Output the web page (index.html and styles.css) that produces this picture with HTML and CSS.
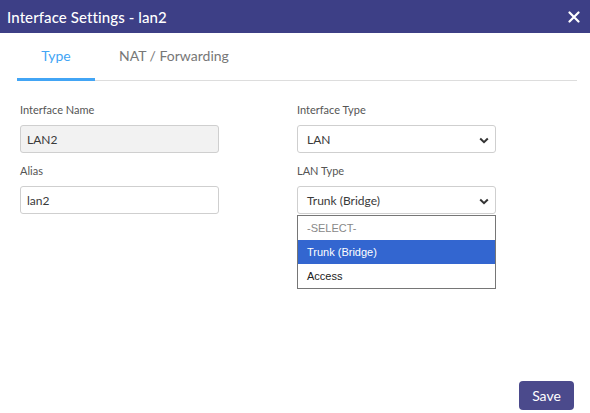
FILE: index.html
```html
<!DOCTYPE html>
<html>
<head>
<meta charset="utf-8">
<link rel="stylesheet" href="styles.css">
</head>
<body>
<div class="dialog">
  <div class="header">
    <span class="title">Interface Settings - lan2</span>
    <svg class="close" width="12" height="12" viewBox="0 0 12 12"><path d="M1.5 1.5 L10.5 10.5 M10.5 1.5 L1.5 10.5" stroke="#fff" stroke-width="2.2" stroke-linecap="round"/></svg>
  </div>
  <div class="tabs">
    <div class="tab active">Type</div>
    <div class="tab">NAT / Forwarding</div>
  </div>
  <div class="form">
    <div class="field">
      <div class="label">Interface Name</div>
      <div class="control disabled">LAN2</div>
    </div>
    <div class="field">
      <div class="label">Interface Type</div>
      <div class="control select">LAN
        <svg class="chev" width="10" height="7" viewBox="0 0 10 7"><path d="M1.2 1.5 L5 5.2 L8.8 1.5" fill="none" stroke="#333" stroke-width="2"/></svg>
      </div>
    </div>
    <div class="field">
      <div class="label">Alias</div>
      <div class="control">lan2</div>
    </div>
    <div class="field">
      <div class="label">LAN Type</div>
      <div class="control select">Trunk (Bridge)
        <svg class="chev" width="10" height="7" viewBox="0 0 10 7"><path d="M1.2 1.5 L5 5.2 L8.8 1.5" fill="none" stroke="#333" stroke-width="2"/></svg>
        <div class="menu">
          <div class="opt placeholder">-SELECT-</div>
          <div class="opt selected">Trunk (Bridge)</div>
          <div class="opt">Access</div>
        </div>
      </div>
    </div>
  </div>
  <div class="footer">
    <button class="save">Save</button>
  </div>
</div>
</body>
</html>
```
FILE: styles.css
```css
html, body {
  margin: 0;
  padding: 0;
  background: #fff;
}
body {
  font-family: Lato, "Noto Sans", sans-serif;
  width: 590px;
  height: 413px;
  overflow: hidden;
}
.dialog {
  display: flex;
  flex-direction: column;
  height: 413px;
}
.header {
  height: 33px;
  background: #3d3f86;
  display: flex;
  align-items: center;
  justify-content: space-between;
  padding: 0 10px 0 7px;
  color: #fff;
}
.title {
  font-size: 15px;
  font-weight: 500;
  letter-spacing: 0.1px;
}
.close {
  display: block;
}
.tabs {
  display: flex;
  margin: 0 13px 0 17px;
  height: 47px;
  border-bottom: 1px solid #dddddd;
}
.tab {
  display: flex;
  align-items: center;
  justify-content: center;
  font-size: 14px;
  color: #777;
  padding: 0 24px;
  margin-bottom: -1px;
  border-bottom: 3px solid transparent;
  box-sizing: border-box;
}
.tab.active {
  color: #42a5f5;
  border-bottom-color: #42a5f5;
  width: 78px;
  padding: 0;
}
.form {
  display: grid;
  grid-template-columns: 199px 199px;
  column-gap: 78px;
  row-gap: 11px;
  padding: 22px 0 0 20px;
}
.label {
  font-size: 11px;
  color: #555;
  height: 14px;
  line-height: 14px;
  margin-bottom: 8px;
}
.control {
  position: relative;
  height: 28px;
  box-sizing: border-box;
  border: 1px solid #cfcfcf;
  border-radius: 3px;
  font-size: 12px;
  color: #3a3a3a;
  display: flex;
  align-items: center;
  padding: 0 6px;
  background: #fff;
}
.control.disabled {
  background: #f2f2f2;
}
.control.select {
  padding-left: 9px;
}
.chev {
  position: absolute;
  right: 6px;
  top: 11px;
}
.menu {
  position: absolute;
  left: -1px;
  top: 28px;
  width: 199px;
  box-sizing: border-box;
  border: 1px solid #767676;
  background: #fff;
  font-family: "Liberation Sans", Arial, sans-serif;
  font-size: 11px;
}
.opt {
  height: 24px;
  line-height: 24px;
  padding-left: 9px;
  color: #222;
}
.opt.placeholder {
  color: #888;
}
.opt.selected {
  background: #3366d0;
  color: #fff;
}
.footer {
  margin-top: auto;
  display: flex;
  justify-content: flex-end;
  padding: 0 16px 3px 0;
}
.save {
  font-family: Lato, "Noto Sans", sans-serif;
  background: #4b4a8c;
  color: #fff;
  border: none;
  border-radius: 4px;
  font-size: 14px;
  width: 55px;
  height: 29px;
  padding: 0;
}
```
